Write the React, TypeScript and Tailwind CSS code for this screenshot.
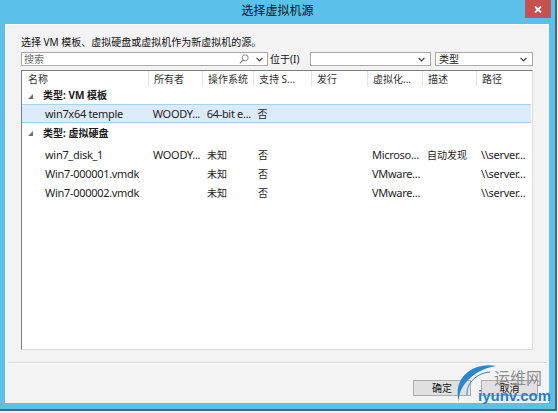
import React from 'react'

const cols = [126, 54, 51, 58, 56, 55, 54, 56]
const headers = ['名称', '所有者', '操作系统', '支持 S...', '发行', '虚拟化...', '描述', '路径']

type Row =
  | { kind: 'group'; label: string; h: string }
  | { kind: 'item'; cells: string[]; selected?: boolean }

const rows: Row[] = [
  { kind: 'group', label: '类型: VM 模板', h: 'h-[18px]' },
  { kind: 'item', selected: true, cells: ['win7x64 temple', 'WOODY...', '64-bit e...', '否', '', '', '', ''] },
  { kind: 'group', label: '类型: 虚拟硬盘', h: 'h-[22px] pb-[3px]' },
  { kind: 'item', cells: ['win7_disk_1', 'WOODY...', '未知', '否', '', 'Microso...', '自动发现', '\\\\server...'] },
  { kind: 'item', cells: ['Win7-000001.vmdk', '', '未知', '否', '', 'VMware...', '', '\\\\server...'] },
  { kind: 'item', cells: ['Win7-000002.vmdk', '', '未知', '否', '', 'VMware...', '', '\\\\server...'] },
]

const cjk = (t: string) => /^[\u3000-\u9fff]/.test(t)

const Chevron = () => (
  <svg width="7" height="5" viewBox="0 0 7 5" className="shrink-0">
    <path d="M0.6 0.8 L3.5 3.8 L6.4 0.8" fill="none" stroke="#3a3a3a" strokeWidth="1.2" />
  </svg>
)

const Combo = ({ w, text }: { w: string; text?: string }) => (
  <div className={`${w} h-full bg-white border border-[#a9a9a9] flex items-center pl-[3px] pr-[5px]`}>
    <span className="flex-1 text-[10px] leading-none text-[#222]">{text}</span>
    <Chevron />
  </div>
)

export default function App() {
  return (
    <div className="w-[558px] h-[413px] bg-[#f2f2f2] overflow-hidden font-['Noto_Sans','Noto_Sans_CJK_SC',sans-serif]">
      <div className="relative w-[557px] h-[411px] bg-[#5bc0ea] border-r-2 border-b-2 border-[#47697a] flex flex-col pl-[5px] pr-[6px] pb-[6px]">
        {/* title bar */}
        <div className="h-[24px] shrink-0 flex items-center justify-center -ml-[5px] -mr-[6px] pb-[2px]">
          <span className="text-[12px] text-[#111]">选择虚拟机源</span>
        </div>
        <div className="absolute top-0 right-[4px] w-[26px] h-[18px] bg-[#c75050] flex items-center justify-center">
          <svg width="8" height="7" viewBox="0 0 8 7">
            <path d="M1 0.5 L7 6.5 M7 0.5 L1 6.5" stroke="#fff" strokeWidth="1.8" />
          </svg>
        </div>

        {/* client area */}
        <div className="flex-1 bg-[#f4f3f4] border-l border-t border-white flex flex-col px-[15px] pt-[10px]">
          <p className="text-[10px] leading-[14px] text-[#111]">选择 VM 模板、虚拟硬盘或虚拟机作为新虚拟机的源。</p>

          <div className="mt-[3px] h-[14px] flex items-stretch w-[512px]">
            <div className="w-[247px] bg-white border border-[#a9a9a9] flex items-center pl-[2px] pr-[4px]">
              <span className="flex-1 text-[10px] leading-none text-[#6d6d6d]">搜索</span>
              <svg width="10" height="10" viewBox="0 0 10 10" className="mr-[7px]">
                <circle cx="6.2" cy="3.8" r="3" fill="none" stroke="#8a8a8a" strokeWidth="1" />
                <path d="M4 6 L0.8 9.2" stroke="#8a8a8a" strokeWidth="1.3" />
              </svg>
              <Chevron />
            </div>
            <div className="w-[42px] flex items-center pl-[2px]">
              <span className="text-[10px] leading-none text-[#111]">位于(I)</span>
            </div>
            <Combo w="w-[121px]" />
            <div className="w-[4px]" />
            <Combo w="w-[98px]" text="类型" />
          </div>

          {/* list view */}
          <div className="mt-[4px] w-[512px] h-[280px] shrink-0 bg-white border border-t-[#7e7e7e] border-l-[#7e7e7e] border-r-[#dcdcdc] border-b-[#dcdcdc]">
            <div className="flex h-[15px]">
              {headers.map((h, i) => (
                <div
                  key={h}
                  style={{ width: cols[i] }}
                  className={`flex items-center overflow-hidden whitespace-nowrap text-[10px] leading-none text-[#333] ${i === 0 ? 'pl-[6px]' : 'pl-[5px] border-l border-[#e3e3e3]'}`}
                >
                  {h}
                </div>
              ))}
            </div>
            {rows.map((r, ri) =>
              r.kind === 'group' ? (
                <div key={ri} className={`${r.h} flex items-center pl-[6px]`}>
                  <svg width="5" height="5" viewBox="0 0 5 5" className="mt-[2px]">
                    <path d="M5 0 L5 5 L0 5 Z" fill="#707070" />
                  </svg>
                  <span className="ml-[10px] text-[10px] leading-none font-bold text-[#1a1a1a]">{r.label}</span>
                </div>
              ) : (
                <div
                  key={ri}
                  className={`flex h-[19px] border-y ${r.selected ? 'bg-[#dbebfa] border-[#a6d3f0] w-[509px]' : 'border-transparent'}`}
                >
                  {r.cells.map((c, ci) => (
                    <div
                      key={ci}
                      style={{ width: cols[ci] }}
                      className={`flex items-center overflow-hidden whitespace-nowrap text-[#1e1e1e] leading-none ${cjk(c) ? 'text-[10px]' : 'text-[11px] tracking-[-0.3px]'} ${ci === 0 ? 'pl-[23px]' : 'pl-[5px]'}`}
                    >
                      {c}
                    </div>
                  ))}
                </div>
              )
            )}
          </div>

          {/* separator */}
          <div className="mt-[12px] -mx-[13px] border-t border-[#d6d6d6] border-b border-b-white" />

          <div className="mt-[16px] flex justify-end gap-[10px] mr-[-4px]">
            <button className="w-[58px] h-[16px] bg-[#e1e1e1] border border-[#acacac] text-[10px] leading-none text-[#111]">确定</button>
            <button className="w-[57px] h-[16px] bg-[#e1e1e1] border border-[#acacac] text-[10px] leading-none text-[#111]">取消</button>
          </div>
        </div>

        {/* watermark */}
        <div className="absolute left-[452px] top-[362px] w-[106px] h-[46px] pointer-events-none">
          <svg width="50" height="46" viewBox="0 0 50 46" className="absolute left-0 top-0">
            <path d="M44 4 C22 0, 0 15, 7 40 C6 25, 20 8, 44 4 Z" fill="#2a86cf" />
            <path d="M38 10 C25 11, 14 21, 15 33" fill="none" stroke="#2a86cf" strokeWidth="1" />
          </svg>
          <span className="absolute left-[42px] top-[7px] text-[16px] leading-none text-[#8c8c8c] font-['Noto_Sans_CJK_SC',sans-serif]">运维网</span>
          <span className="absolute left-[26px] top-[26px] text-[15px] leading-none font-bold text-[#1f7fcf] font-['Liberation_Sans',sans-serif]">iyunv.com</span>
        </div>
      </div>
    </div>
  )
}
